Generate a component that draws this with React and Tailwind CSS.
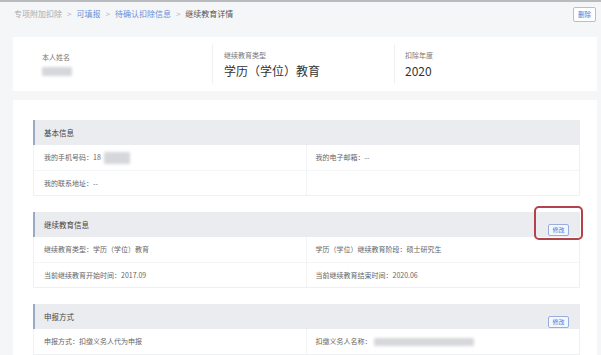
import React from "react";

const font = { fontFamily: '"Noto Sans CJK SC", "Noto Sans", sans-serif' };

const EditButton = ({ highlight }) => (
  <div className="relative">
    {highlight && (
      <div className="absolute -inset-x-[14px] -top-[7px] -bottom-[3px] rounded-[5px] border-2 border-[#b3434b]" />
    )}
    <button className="h-[12px] w-[21px] rounded-[2px] border border-[#98aee0] bg-[#f4f7fd] text-[6px] leading-none text-[#4a78d8]">
      修改
    </button>
  </div>
);

const Section = ({ title, rows, edit, highlight }) => (
  <div className="mr-[17px] ml-[20px]">
    <div className="flex h-[25px] items-center justify-between border-l-2 border-[#9aa9c6] bg-[#ebecef] pr-[11px] pl-[9px]">
      <span className="text-[7.5px] text-[#444]">{title}</span>
      {edit && <EditButton highlight={highlight} />}
    </div>
    <div className="border-x border-b border-[#eff0f2]">
      {rows.map((row, i) => (
        <div
          key={i}
          className={`grid h-[25px] grid-cols-2 items-center ${i > 0 ? "border-t border-[#f4f5f6]" : ""}`}
        >
          <div className="flex h-full items-center border-r border-[#f3f4f5] pl-[10px] text-[7px] text-[#666]">
            {row[0]}
          </div>
          <div className="flex h-full items-center pl-[9px] text-[7px] text-[#666]">{row[1]}</div>
        </div>
      ))}
    </div>
  </div>
);

const Blur = ({ className }) => <span className={`inline-block rounded-[1px] bg-[#d6d7da] blur-[1.5px] ${className}`} />;

export default function App() {
  return (
    <div className="flex h-[355px] w-[601px] flex-col overflow-hidden border-t-2 border-[#b9bbbf] bg-[#f5f6f8]" style={font}>
      <div className="flex h-[24px] shrink-0 items-center justify-between pr-[5px] pl-[14px]">
        <div className="flex items-center gap-[5px] text-[8px]">
          <span className="text-[#a8abb1]">专项附加扣除</span>
          <span className="text-[#b0b3b9]">&gt;</span>
          <span className="text-[#6a8fd8]">可填报</span>
          <span className="text-[#b0b3b9]">&gt;</span>
          <span className="text-[#6a8fd8]">待确认扣除信息</span>
          <span className="text-[#b0b3b9]">&gt;</span>
          <span className="text-[#555]">继续教育详情</span>
        </div>
        <button className="h-[15px] w-[23px] rounded-[2px] border border-[#b8bfcc] bg-white text-[6.5px] leading-none text-[#4a78d8]">
          删除
        </button>
      </div>

      <div className="mt-[11px] mr-[4px] ml-[13px] flex h-[54px] shrink-0 items-center bg-white">
        <div className="flex h-[40px] w-[200px] flex-col justify-center border-r border-[#eef0f2] pl-[29px]">
          <span className="text-[7px] text-[#777]">本人姓名</span>
          <Blur className="mt-[5px] h-[9px] w-[30px]" />
        </div>
        <div className="flex h-[40px] w-[182px] flex-col justify-center border-r border-[#eef0f2] pl-[11px]">
          <span className="text-[7px] text-[#777]">继续教育类型</span>
          <span className="mt-[2px] text-[12px] leading-[15px] text-[#333]">学历（学位）教育</span>
        </div>
        <div className="flex h-[40px] flex-col justify-center pl-[10px]">
          <span className="text-[7px] text-[#777]">扣除年度</span>
          <span className="mt-[2px] text-[12px] leading-[15px] text-[#333]">2020</span>
        </div>
      </div>

      <div className="mt-[9px] mr-[4px] ml-[13px] flex flex-1 flex-col gap-[16px] bg-white pt-[20px]">
        <Section
          title="基本信息"
          rows={[
            [
              <span className="flex items-center">
                我的手机号码：18
                <Blur className="ml-[3px] h-[12px] w-[26px]" />
              </span>,
              "我的电子邮箱：--",
            ],
            ["我的联系地址：--", ""],
          ]}
        />
        <Section
          title="继续教育信息"
          edit
          highlight
          rows={[
            ["继续教育类型：学历（学位）教育", "学历（学位）继续教育阶段：硕士研究生"],
            ["当前继续教育开始时间：2017.09", "当前继续教育结束时间：2020.06"],
          ]}
        />
        <Section
          title="申报方式"
          edit
          rows={[
            [
              "申报方式：扣缴义务人代为申报",
              <span className="flex items-center">
                扣缴义务人名称：
                <Blur className="ml-[2px] h-[8px] w-[100px]" />
              </span>,
            ],
          ]}
        />
      </div>
    </div>
  );
}
